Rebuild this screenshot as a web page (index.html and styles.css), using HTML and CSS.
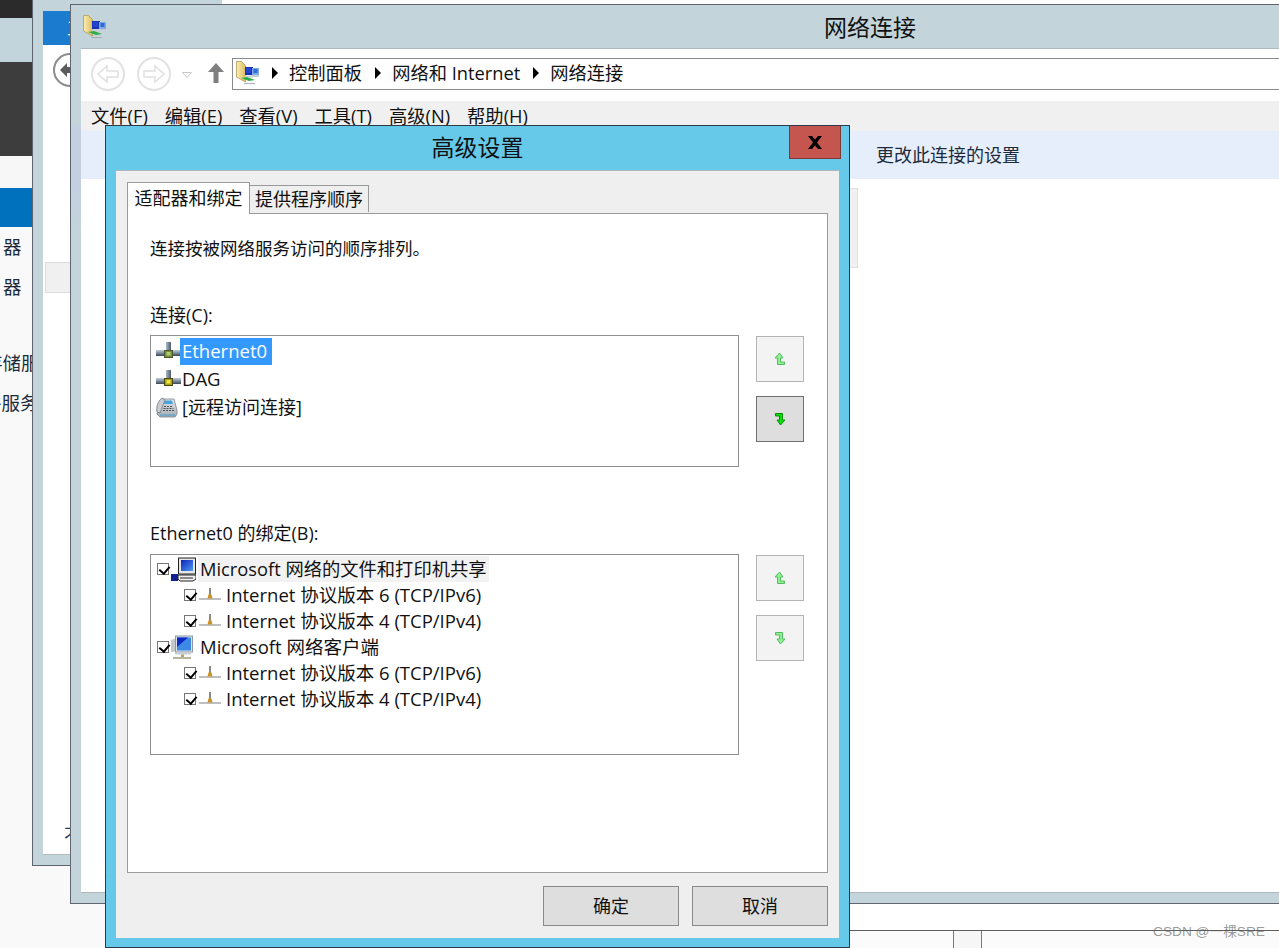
FILE: index.html
```html
<!DOCTYPE html>
<html lang="zh-CN">
<head>
<meta charset="utf-8">
<title>高级设置</title>
<link rel="stylesheet" href="styles.css">
</head>
<body>
<svg class="defs" width="0" height="0" aria-hidden="true">
  <defs>
    <linearGradient id="pipe" x1="0" y1="0" x2="0" y2="1"><stop offset="0" stop-color="#c4d0da"/><stop offset=".5" stop-color="#7c8ea1"/><stop offset="1" stop-color="#3d4650"/></linearGradient>
    <linearGradient id="pipeV" x1="0" y1="0" x2="1" y2="0"><stop offset="0" stop-color="#a7b8c7"/><stop offset="1" stop-color="#4d5b69"/></linearGradient>
    <linearGradient id="screen" x1="0" y1="0" x2="1" y2="1"><stop offset="0" stop-color="#0a22b8"/><stop offset="1" stop-color="#4f9bf0"/></linearGradient>
    <linearGradient id="folder" x1="0" y1="0" x2="1" y2="0"><stop offset="0" stop-color="#fbeeb4"/><stop offset="1" stop-color="#dcbb62"/></linearGradient>
    <linearGradient id="silver" x1="0" y1="0" x2="0" y2="1"><stop offset="0" stop-color="#e4e7ea"/><stop offset="1" stop-color="#a4abb1"/></linearGradient>
    <symbol id="net-folder" viewBox="0 0 24 24">
      <path d="M.5.500h5l4 4V21l-9-5z" fill="url(#folder)" stroke="#b39a55" stroke-width=".8"/>
      <rect x="9" y="6" width="8" height="8" fill="#1533b5"/>
      <rect x="10" y="7" width="5" height="5" fill="#2443d0"/>
      <rect x="16" y="7" width="7" height="7" fill="#7fa8e6"/>
      <rect x="17.500" y="8" width="4" height="4" fill="#2f6bd6"/>
      <path d="M9 14.500h8v2H9zM16 14h7v2h-7z" fill="#c9ced6"/>
      <path d="M5 17l8 3 6-1-8-3z" fill="#2fae49"/>
      <path d="M8 22.500h11" stroke="#aab2ba" stroke-width="1.200"/>
    </symbol>
    <symbol id="eth" viewBox="0 0 25 20">
      <rect x="10" y="1" width="5" height="10" fill="url(#pipeV)"/>
      <rect x="0" y="9" width="25" height="6" fill="url(#pipe)"/>
      <rect x="8.500" y="9.500" width="8" height="7" fill="#7d8c3a" stroke="#4c5a32"/>
      <rect x="10.500" y="11" width="4" height="3.500" fill="#a9cf6f"/>
    </symbol>
    <symbol id="eth-y" viewBox="0 0 25 20">
      <rect x="10" y="1" width="5" height="10" fill="url(#pipeV)"/>
      <rect x="0" y="9" width="25" height="6" fill="url(#pipe)"/>
      <rect x="8.500" y="9.500" width="8" height="7" fill="#a8a116" stroke="#4c4a12"/>
      <rect x="10.500" y="11" width="4" height="3.500" fill="#efe53a"/>
    </symbol>
    <symbol id="phone" viewBox="0 0 22 21">
      <path d="M2 13L7 2h11l3 11v4l-2 3H4l-3-3z" fill="url(#silver)" stroke="#7d8388" stroke-width=".8"/>
      <path d="M6 1C2 4 0 10 1 15l3 1 5-13z" fill="#c9cdd0" stroke="#6e7478" stroke-width=".8"/>
      <path d="M9 3.500h7l1 3.500H8z" fill="#46a3dc"/>
      <path d="M8 9.500h9M7.500 11.500h10M7 13.500h11" stroke="#4d5459" stroke-width="1.200" stroke-dasharray="2 1"/>
      <path d="M4 18h15" stroke="#4aa0d8" stroke-width="1"/>
    </symbol>
    <symbol id="bind" viewBox="0 0 22 14">
      <path d="M0 11h22" stroke="#a8aaac" stroke-width="1.500"/>
      <rect x="10" y="0" width="2" height="8" fill="#8b8b80"/>
      <path d="M8.500 10.500l1-4h3l1 4z" fill="#cf9225"/>
    </symbol>
    <symbol id="pc" viewBox="0 0 25 25">
      <rect x="7.500" y="1" width="17" height="16" fill="#e6e6e6" stroke="#222"/>
      <rect x="10" y="3" width="12" height="11" fill="url(#screen)"/>
      <path d="M7 18h18v4l-3 2H9l-2-2z" fill="#f1f1f1" stroke="#222"/>
      <path d="M9 21h13" stroke="#222" stroke-width="1"/>
      <rect x="0" y="17" width="7" height="7" fill="#10208e"/>
    </symbol>
    <symbol id="client" viewBox="0 0 22 24">
      <path d="M0 5l6-2v13l-6 1z" fill="#c3c8cb"/>
      <rect x="4.500" y="1" width="17" height="16" fill="#dbe3ee" stroke="#8d97a6"/>
      <path d="M6 2.500h14v13H6z" fill="#3d8ae6"/>
      <path d="M6 2.500h11L6 12z" fill="#0d28c4"/>
      <path d="M4 17.500h16v2H4z" fill="#c9ced4"/>
      <rect x="10" y="19.500" width="3" height="2.500" fill="#b5a06a"/>
      <path d="M2 23h18" stroke="#a49a7a" stroke-width="1.500"/>
    </symbol>
    <symbol id="up" viewBox="0 0 12 14">
      <path d="M5.500 1L1 6h2.500v6.500h7V10H6.500V6H9z" fill="currentColor" stroke="var(--edge)" stroke-width="1"/>
    </symbol>
    <symbol id="down" viewBox="0 0 12 14">
      <path d="M6.500 13L11 8H8.500V1.500h-7V4h4v4H3z" fill="currentColor" stroke="var(--edge)" stroke-width="1"/>
    </symbol>
  </defs>
</svg>

<div class="desktop">
  <aside class="win-server">
    <div class="band-dark"></div>
    <div class="band-title"></div>
    <div class="band-graphite"></div>
    <div class="band-light"></div>
    <div class="band-blue"></div>
    <div class="clip-line line-a">器</div>
    <div class="clip-line line-b">器</div>
    <div class="clip-line line-c">存储服务</div>
    <div class="clip-line line-d">件服务器</div>
  </aside>

  <section class="win-back">
    <div class="back-inner">
      <div class="back-blue"><span>工</span></div>
      <div class="back-circle"><svg width="20" height="20" viewBox="0 0 20 20"><path d="M9 3L2 10l7 7v-4h9V7H9z" fill="#5b5b5b"/></svg></div>
      <div class="back-grey"></div>
      <div class="back-char">不</div>
    </div>
  </section>

  <section class="win-right">
    <div class="right-row">
      <div class="right-cell"></div>
      <div class="right-cell narrow"></div>
      <div class="right-cell wide"></div>
    </div>
  </section>

  <section class="win-net">
    <header class="net-title">
      <svg class="net-title-icon" width="24" height="24"><use href="#net-folder"/></svg>
      <span>网络连接</span>
    </header>
    <div class="net-inner">
      <div class="nav">
        <span class="nav-circle"><svg width="26" height="22" viewBox="0 0 26 22"><path d="M12 3L3 11l9 8v-5h11V8H12z" fill="none" stroke="#e0e0e0" stroke-width="1.500"/></svg></span>
        <span class="nav-circle"><svg width="26" height="22" viewBox="0 0 26 22"><path d="M14 3l9 8-9 8v-5H3V8h11z" fill="none" stroke="#e0e0e0" stroke-width="1.500"/></svg></span>
        <svg class="nav-drop" width="10" height="6" viewBox="0 0 10 6"><path d="M.5.500h9L5 5.500z" fill="none" stroke="#c8c8c8"/></svg>
        <svg class="nav-up" width="16" height="20" viewBox="0 0 16 20"><path d="M8 0L0 9h5.500v11h5V9H16z" fill="#7f7f7f"/></svg>
        <div class="address">
          <svg class="addr-icon" width="24" height="24"><use href="#net-folder"/></svg>
          <i class="caret first"></i><span>控制面板</span>
          <i class="caret"></i><span>网络和 Internet</span>
          <i class="caret"></i><span>网络连接</span>
        </div>
      </div>
      <nav class="menu">
        <span>文件(F)</span><span>编辑(E)</span><span>查看(V)</span><span>工具(T)</span><span>高级(N)</span><span>帮助(H)</span>
      </nav>
      <div class="cmd"><span>更改此连接的设置</span></div>
      <div class="tiles"></div>
      <div class="net-char">不</div>
    </div>
  </section>

  <section class="dialog">
    <header class="dlg-title">
      <span>高级设置</span>
      <div class="close"><svg width="18" height="15" viewBox="0 0 18 15"><path d="M2 1h4l3 3.500L12 1h4l-5 6.500 5 6.500h-4L9 10.500 6 14H2l5-6.500z" fill="#000"/></svg></div>
    </header>
    <div class="dlg-body">
      <div class="tabs">
        <div class="tab active">适配器和绑定</div>
        <div class="tab">提供程序顺序</div>
      </div>
      <div class="panel">
        <p class="intro">连接按被网络服务访问的顺序排列。</p>
        <p class="label first-label">连接(C):</p>
        <div class="list-row conn-row">
          <div class="list conn-list">
            <div class="conn"><svg width="25" height="20"><use href="#eth"/></svg><span class="selected">Ethernet0</span></div>
            <div class="conn"><svg width="25" height="20"><use href="#eth-y"/></svg><span>DAG</span></div>
            <div class="conn"><svg class="phone" width="22" height="21"><use href="#phone"/></svg><span class="remote">[远程访问连接]</span></div>
          </div>
          <div class="arrows">
            <div class="arrow"><svg width="12" height="14"><use href="#up"/></svg></div>
            <div class="arrow on"><svg width="12" height="14"><use href="#down"/></svg></div>
          </div>
        </div>
        <p class="label second-label">Ethernet0 的绑定(B):</p>
        <div class="list-row">
          <div class="list bind-list">
            <div class="bind top">
              <i class="check"></i><svg class="big" width="25" height="25"><use href="#pc"/></svg><span class="soft">Microsoft 网络的文件和打印机共享</span>
            </div>
            <div class="bind sub"><i class="check"></i><svg width="22" height="14"><use href="#bind"/></svg><span>Internet 协议版本 6 (TCP/IPv6)</span></div>
            <div class="bind sub"><i class="check"></i><svg width="22" height="14"><use href="#bind"/></svg><span>Internet 协议版本 4 (TCP/IPv4)</span></div>
            <div class="bind top">
              <i class="check"></i><svg class="big" width="22" height="24"><use href="#client"/></svg><span class="pad">Microsoft 网络客户端</span>
            </div>
            <div class="bind sub"><i class="check"></i><svg width="22" height="14"><use href="#bind"/></svg><span>Internet 协议版本 6 (TCP/IPv6)</span></div>
            <div class="bind sub"><i class="check"></i><svg width="22" height="14"><use href="#bind"/></svg><span>Internet 协议版本 4 (TCP/IPv4)</span></div>
          </div>
          <div class="arrows">
            <div class="arrow"><svg width="12" height="14"><use href="#up"/></svg></div>
            <div class="arrow"><svg width="12" height="14"><use href="#down"/></svg></div>
          </div>
        </div>
      </div>
      <div class="actions">
        <button class="btn" type="button">确定</button>
        <button class="btn" type="button">取消</button>
      </div>
    </div>
  </section>

  <div class="watermark">CSDN @一棵SRE</div>
</div>
</body>
</html>
```
FILE: styles.css
```css
* { box-sizing: border-box; }
html, body { margin: 0; height: 100%; overflow: hidden; }
body {
  background: #f9f9f9;
  color: #111;
  font-family: "Open Sans", "Noto Sans CJK SC", sans-serif;
  font-size: 18px;
  line-height: 26px;
}
.defs { position: absolute; }
p { margin: 0; }
.desktop { position: relative; width: 1279px; height: 948px; overflow: hidden; }

/* far left window */
.win-server { position: absolute; left: 0; top: 0; width: 32px; height: 948px; overflow: hidden; color: #1c2b3c; font-size: 18.500px; }
.band-dark { height: 18px; background: #2b2b2b; }
.band-title { height: 44px; background: #c3d5dc; }
.band-graphite { height: 94px; background: #3d3d3d; }
.band-light { height: 32px; background: #f7f7f7; }
.band-blue { height: 39px; background: #0072bd; }
.clip-line { position: absolute; white-space: nowrap; line-height: 24px; }
.line-a { left: 3px; top: 235px; }
.line-b { left: 3px; top: 275px; }
.line-c { left: -16px; top: 351px; }
.line-d { left: -17px; top: 391px; }

/* window behind */
.win-back { position: absolute; left: 32px; top: -12px; width: 191px; height: 878px; background: #c3d5db; border: 1px solid #5f6670; padding: 22px 0 10px 10px; }
.back-inner { position: relative; height: 100%; background: #fff; border-bottom: 1px solid #b4bcc2; }
.back-blue { height: 34px; background: #1a7bcf; color: #fff; padding: 4px 0 0 24px; }
.back-circle { margin: 8px 0 0 10px; width: 34px; height: 34px; border: 2px solid #8c8c8c; border-radius: 50%; padding: 5px 3px; background: #fff; line-height: 0; }
.back-grey { margin: 175px 0 0 2px; height: 31px; background: #f0f0f0; border: 1px solid #dcdcdc; }
.back-char { position: absolute; left: 21px; bottom: 6px; color: #233a66; }

/* window on the right, bottom */
.win-right { position: absolute; left: 222px; top: 0; right: 0; height: 948px; background: #fff; display: flex; flex-direction: column; justify-content: flex-end; }
.right-row { display: flex; height: 18px; border-top: 1px solid #5f5f5f; }
.right-cell { width: 732px; background: #fbfbfb; border-right: 1px solid #7a7a7a; }
.right-cell.narrow { width: 28px; background: #f6f6f6; }
.right-cell.wide { flex: 1; border-right: 0; }

/* network connections */
.win-net { position: absolute; left: 70px; top: 4px; width: 1600px; height: 900px; background: linear-gradient(#c3d5db 0 118px, #c4d0e0 122px 180px, #c3d5db 230px); border: 1px solid #5f6670; padding: 0 10px 10px; display: flex; flex-direction: column; }
.net-title { height: 43px; flex: none; display: flex; align-items: center; justify-content: center; font-size: 23px; position: relative; }
.net-title-icon { position: absolute; left: 2px; top: 10px; }
.net-inner { flex: 1; position: relative; background: #fff; border-top: 1px solid #aeb8be; border-bottom: 1px solid #aeb8be; }
.nav { height: 52px; display: flex; align-items: center; padding-left: 10px; }
.nav-circle { width: 34px; height: 34px; border: 2px solid #e2e2e2; border-radius: 50%; display: flex; align-items: center; justify-content: center; margin-right: 12px; margin-top: -2px; }
.nav-circle + .nav-circle { margin-right: 11px; }
.nav-drop { margin: 0; }
.nav-up { margin: -4px 8px 0 16px; }
.address { width: 1400px; height: 32px; margin-top: -3px; border: 1px solid #8b8b8b; display: flex; align-items: center; padding: 0 0 2px 3px; font-size: 18.300px; }
.addr-icon { margin-right: 12px; }
.caret { width: 0; height: 0; border-left: 6px solid #000; border-top: 6px solid transparent; border-bottom: 6px solid transparent; margin: 0 11px 0 13px; }
.caret.first { margin-left: 0; margin-right: 11px; }
.menu { height: 30px; background: #f0f0f0; display: flex; gap: 17px; padding: 2px 0 0 10px; font-size: 18.300px; }
.cmd { height: 48px; background: #e6eefb; display: flex; align-items: center; padding-left: 795px; color: #1c2b3c; }
.tiles { margin: 9px 0 0 700px; width: 77px; height: 80px; background: #f0f0f0; border: 1px solid #e0e0e0; }
.net-char { position: absolute; left: 23px; bottom: 6px; color: #7a4a22; }

/* dialog */
.dialog { position: absolute; left: 105px; top: 125px; width: 745px; height: 823px; background: #66c9ea; border: 1px solid #2b3a46; padding: 0 10px 9px; display: flex; flex-direction: column; }
.dlg-title { height: 44px; flex: none; display: flex; align-items: center; justify-content: center; font-size: 23px; position: relative; padding-bottom: 2px; }
.close { position: absolute; right: -2px; top: 0; width: 52px; height: 33px; background: #c4564f; border: 1px solid #7d3833; border-top: 0; display: flex; align-items: center; justify-content: center; }
.dlg-body { flex: 1; background: #efefef; border-top: 1px solid #aeb8be; padding: 11px 11px 12px; display: flex; flex-direction: column; }
.tabs { display: flex; align-items: flex-end; height: 31px; flex: none; position: relative; z-index: 1; }
.tab { height: 27px; width: 119px; margin-bottom: 1px; background: #efefef; border: 1px solid #9a9a9a; border-bottom: 0; text-align: center; line-height: 27px; white-space: nowrap; }
.tab.active { height: 32px; width: 123px; margin-bottom: -1px; background: #fff; border-right: 1px solid #9a9a9a; line-height: 31px; }
.tab + .tab { margin-left: 0; border-left: 0; }
.panel { height: 660px; flex: none; background: #fff; border: 1px solid #9a9a9a; padding: 21px 22px 0; }
.intro { font-size: 17.500px; }
.first-label { margin-top: 41px; }
.label { font-size: 18px; height: 26px; margin-bottom: 7px; }
.second-label { margin-top: 53px; margin-bottom: 8px; }
.list-row { display: flex; gap: 17px; }
.list { width: 589px; border: 1px solid #8f8f8f; background: #fff; font-size: 18.500px; }
.conn-list { height: 132px; padding: 1px 0 0 5px; }
.conn { height: 28px; display: flex; align-items: center; }
.conn svg { flex: none; }
.conn span { padding: 0 3px 0 1px; }
.conn .remote { font-size: 18px; }
.conn .selected { background: #3399ff; color: #fff; height: 27px; margin-left: -1px; padding: 0 5px 0 2px; }
.phone { margin-right: 3px; }
.arrows { display: flex; flex-direction: column; gap: 14px; padding-top: 1px; }
.arrow { width: 48px; height: 46px; background: #f3f3f3; border: 1px solid #b4b4b4; display: flex; align-items: center; justify-content: center; color: #8ef08e; --edge: #55bb66; }
.arrow.on { background: #dedede; border-color: #6f6f6f; color: #0ae00a; --edge: #0a8a0a; }
.bind-list { height: 201px; padding: 1px 0 0 6px; }
.bind { height: 26px; display: flex; align-items: center; white-space: nowrap; }
.bind.sub { padding-left: 27px; }
.bind .check { width: 12px; height: 12px; flex: none; border: 1px solid #777; background: #fff; position: relative; }
.check::after { content: ""; position: absolute; left: 3px; top: 0; width: 5px; height: 8px; border-right: 2px solid #000; border-bottom: 2px solid #000; transform: rotate(40deg); }
.bind.sub svg { margin: 0 5px 0 3px; flex: none; }
.bind.top .big { margin-left: 2px; flex: none; }
.soft { background: #f2f2f2; padding: 0 2px; margin-left: 2px; height: 26px; font-size: 18.300px; }
.pad { padding-left: 7px; }
.actions { display: flex; justify-content: flex-end; gap: 13px; margin-top: 13px; }
.btn { width: 136px; height: 40px; background: #dedede; border: 1px solid #8a8a8a; font: inherit; color: #111; padding: 0; }

.watermark { position: absolute; left: 1153px; top: 921px; font-family: "Liberation Sans", "Noto Sans CJK SC", sans-serif; font-size: 13.700px; line-height: 22px; color: rgba(90, 90, 90, .62); white-space: nowrap; }
```
